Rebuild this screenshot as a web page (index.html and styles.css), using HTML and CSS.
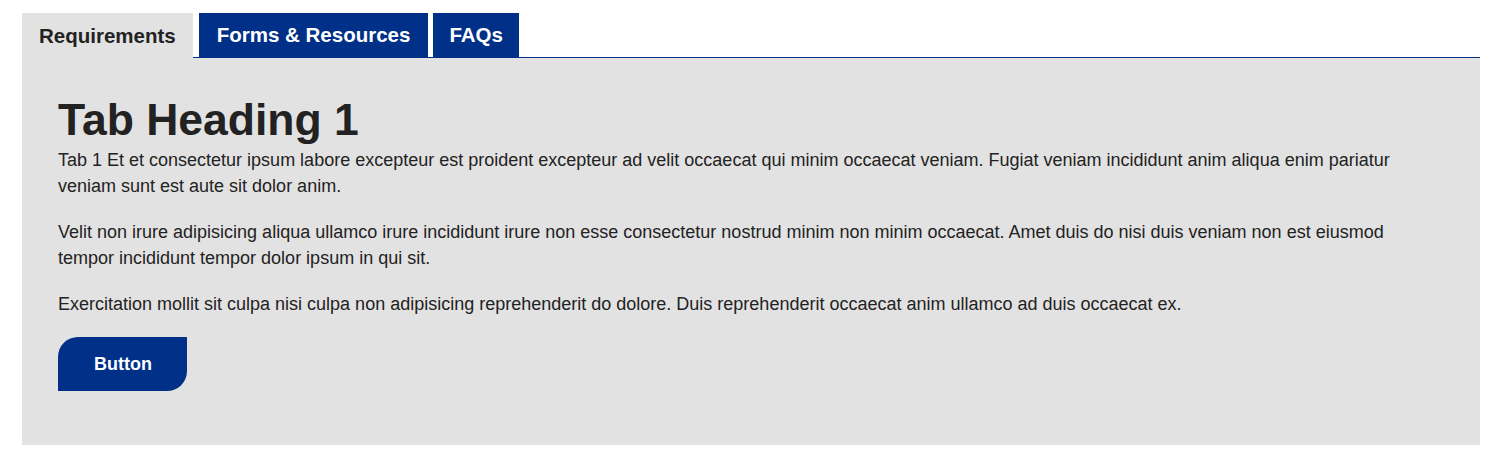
FILE: index.html
```html
<!DOCTYPE html>
<html lang="en">
<head>
<meta charset="utf-8">
<title>Tabs</title>
<link rel="stylesheet" href="styles.css">
</head>
<body>
<div class="tabs">
  <ul class="tab-list">
    <li class="tab tab-active">Requirements</li>
    <li class="tab">Forms &amp; Resources</li>
    <li class="tab tab-faq">FAQs</li>
  </ul>
  <div class="panel">
    <h1 class="panel-title">Tab Heading 1</h1>
    <p class="panel-text">Tab 1 Et et consectetur ipsum labore excepteur est proident excepteur ad velit occaecat qui minim occaecat veniam. Fugiat veniam incididunt anim aliqua enim pariatur veniam sunt est aute sit dolor anim.</p>
    <p class="panel-text">Velit non irure adipisicing aliqua ullamco irure incididunt irure non esse consectetur nostrud minim non minim occaecat. Amet duis do nisi duis veniam non est eiusmod tempor incididunt tempor dolor ipsum in qui sit.</p>
    <p class="panel-text">Exercitation mollit sit culpa nisi culpa non adipisicing reprehenderit do dolore. Duis reprehenderit occaecat anim ullamco ad duis occaecat ex.</p>
    <button class="btn" type="button">Button</button>
  </div>
</div>
</body>
</html>
```

FILE: styles.css
```css
html, body {
  margin: 0;
  padding: 0;
  background: #ffffff;
}

body {
  font-family: "Liberation Sans", Arial, sans-serif;
  color: #222222;
}

.tabs {
  margin: 13px 17px 13px 22px;
}

.tab-list {
  list-style: none;
  margin: 0;
  padding: 0;
  display: flex;
  gap: 5px;
  border-bottom: 1px solid #003087;
}

.tab {
  height: 44px;
  padding: 0 18px;
  display: flex;
  align-items: center;
  font-size: 20.5px;
  font-weight: 700;
  color: #ffffff;
  background: #003087;
  margin-bottom: -1px;
}

.tab-faq {
  padding: 0 16px;
}

.tab-active {
  background: #e2e2e2;
  color: #222222;
  height: 45px;
  padding: 0 17px;
  margin-right: 1px;
}

.panel {
  background: #e2e2e2;
  padding: 38px 36px 54px 36px;
}

.panel-title {
  margin: 0 0 2px 0;
  font-size: 44.5px;
  line-height: 1.1;
  font-weight: 700;
  color: #222222;
}

.panel-text {
  margin: 0 0 20px 0;
  font-size: 18px;
  line-height: 26px;
  color: #222222;
}

.btn {
  display: block;
  border: 0;
  margin: 0;
  background: #003087;
  color: #ffffff;
  font-family: "Liberation Sans", Arial, sans-serif;
  font-size: 18px;
  font-weight: 700;
  line-height: 22px;
  padding: 16px 35px 16px 36px;
  border-radius: 20px 0 20px 0;
}
```
